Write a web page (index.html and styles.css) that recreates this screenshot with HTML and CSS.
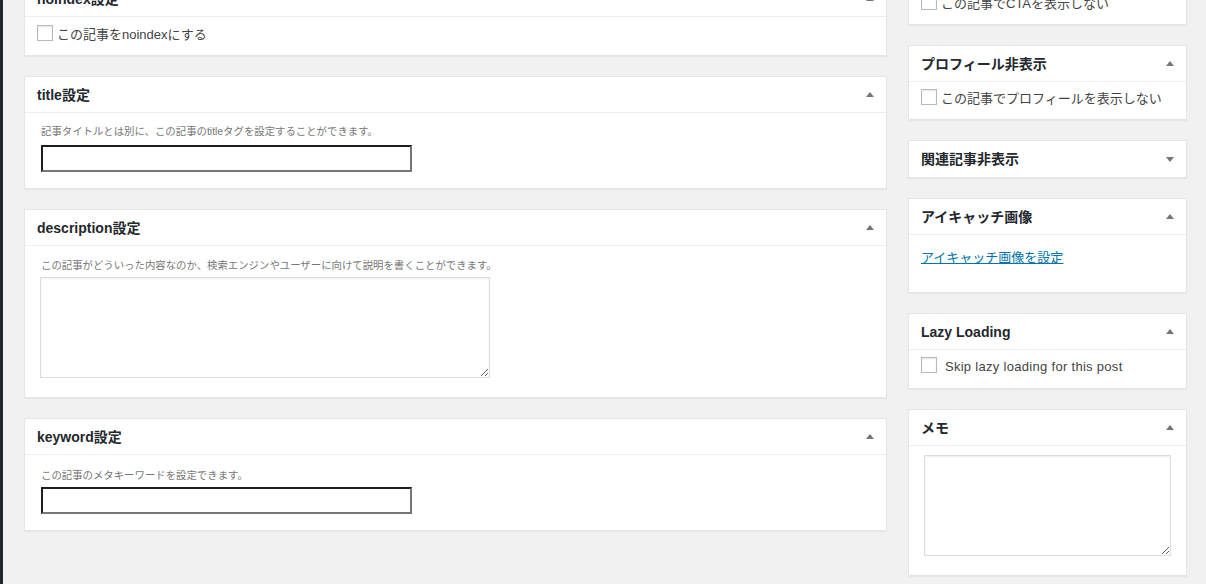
FILE: index.html
```html
<!DOCTYPE html>
<html lang="ja">
<head>
<meta charset="utf-8">
<title>投稿の編集</title>
<link rel="stylesheet" href="styles.css">
</head>
<body>
<div class="page">
  <div class="menu-edge"></div>
  <div class="content">
    <div class="col main">
      <section class="postbox">
        <h2 class="hndle"><span>noindex設定</span><svg class="toggle" viewBox="0 0 8 5"><polygon points="0,5 4,0 8,5"/></svg></h2>
        <div class="inside inside-check first">
          <label class="check"><input type="checkbox" class="cb"><span class="check-text">この記事をnoindexにする</span></label>
        </div>
      </section>

      <section class="postbox">
        <h2 class="hndle"><span>title設定</span><svg class="toggle" viewBox="0 0 8 5"><polygon points="0,5 4,0 8,5"/></svg></h2>
        <div class="inside inside-field title-inside">
          <p class="note">記事タイトルとは別に、この記事のtitleタグを設定することができます。</p>
          <input type="text" class="field-input">
        </div>
      </section>

      <section class="postbox">
        <h2 class="hndle"><span>description設定</span><svg class="toggle" viewBox="0 0 8 5"><polygon points="0,5 4,0 8,5"/></svg></h2>
        <div class="inside inside-field desc-inside">
          <p class="note">この記事がどういった内容なのか、検索エンジンやユーザーに向けて説明を書くことができます。</p>
          <textarea class="field-area"></textarea>
        </div>
      </section>

      <section class="postbox">
        <h2 class="hndle"><span>keyword設定</span><svg class="toggle" viewBox="0 0 8 5"><polygon points="0,5 4,0 8,5"/></svg></h2>
        <div class="inside inside-field kw-inside">
          <p class="note">この記事のメタキーワードを設定できます。</p>
          <input type="text" class="field-input">
        </div>
      </section>
    </div>

    <div class="col side">
      <section class="postbox">
        <h2 class="hndle"><span>CTA非表示</span><svg class="toggle" viewBox="0 0 8 5"><polygon points="0,5 4,0 8,5"/></svg></h2>
        <div class="inside inside-check">
          <label class="check"><input type="checkbox" class="cb"><span class="check-text">この記事でCTAを表示しない</span></label>
        </div>
      </section>

      <section class="postbox">
        <h2 class="hndle"><span>プロフィール非表示</span><svg class="toggle" viewBox="0 0 8 5"><polygon points="0,5 4,0 8,5"/></svg></h2>
        <div class="inside inside-check">
          <label class="check"><input type="checkbox" class="cb"><span class="check-text">この記事でプロフィールを表示しない</span></label>
        </div>
      </section>

      <section class="postbox closed">
        <h2 class="hndle"><span>関連記事非表示</span><svg class="toggle" viewBox="0 0 8 5"><polygon points="0,0 8,0 4,5"/></svg></h2>
      </section>

      <section class="postbox">
        <h2 class="hndle"><span>アイキャッチ画像</span><svg class="toggle" viewBox="0 0 8 5"><polygon points="0,5 4,0 8,5"/></svg></h2>
        <div class="inside thumb-inside">
          <a href="#" class="thumb-link">アイキャッチ画像を設定</a>
        </div>
      </section>

      <section class="postbox">
        <h2 class="hndle"><span>Lazy Loading</span><svg class="toggle" viewBox="0 0 8 5"><polygon points="0,5 4,0 8,5"/></svg></h2>
        <div class="inside inside-check lazy-inside">
          <label class="check"><input type="checkbox" class="cb"><span class="check-text latin"> Skip lazy loading for this post</span></label>
        </div>
      </section>

      <section class="postbox">
        <h2 class="hndle"><span>メモ</span><svg class="toggle" viewBox="0 0 8 5"><polygon points="0,5 4,0 8,5"/></svg></h2>
        <div class="inside memo-inside">
          <textarea class="memo-area"></textarea>
        </div>
      </section>
    </div>
  </div>
</div>
</body>
</html>
```

FILE: styles.css
```css
html, body {
  margin: 0;
  padding: 0;
  height: 100%;
  background: #f1f1f1;
  overflow: hidden;
}

body {
  font-family: "Liberation Sans", "Noto Sans CJK JP", sans-serif;
  font-size: 13px;
  color: #444;
}

.page {
  display: flex;
  height: 584px;
  overflow: hidden;
}

.menu-edge {
  flex: none;
  width: 3px;
  background: #23282d;
}

.content {
  display: flex;
  align-items: flex-start;
  gap: 21px;
  padding-left: 21px;
}

.col {
  display: flex;
  flex-direction: column;
  gap: 20px;
}

.main {
  width: 863px;
  margin-top: -20px;
}

.side {
  width: 279px;
  margin-top: -50px;
}

.postbox {
  box-sizing: border-box;
  background: #fff;
  border: 1px solid #e5e5e5;
  box-shadow: 0 1px 1px rgba(0, 0, 0, 0.04);
}

.hndle {
  display: flex;
  align-items: center;
  justify-content: space-between;
  height: 35px;
  margin: 0;
  padding: 0 12px;
  font-size: 14px;
  font-weight: 700;
  line-height: 20px;
  color: #23282d;
  border-bottom: 1px solid #eee;
}

.closed .hndle {
  height: 36px;
  border-bottom: 0;
}

.toggle {
  width: 8px;
  height: 5px;
  fill: #72777c;
  flex: none;
}

.inside {
  line-height: 18px;
}

.inside-check {
  padding: 7px 12px 14px;
}

.inside-check.first {
  padding-top: 8px;
}

.lazy-inside {
  padding-bottom: 15px;
}

.check {
  display: flex;
  align-items: flex-start;
  height: 16px;
  line-height: 16px;
  white-space: pre;
  color: #444;
}

.check-text {
  margin-top: 2px;
}

.check-text.latin {
  letter-spacing: 0.3px;
}

.cb {
  -webkit-appearance: none;
  appearance: none;
  box-sizing: border-box;
  width: 16px;
  height: 16px;
  margin: 0 4px 0 0;
  border: 1px solid #b4b9be;
  background: #fff;
  box-shadow: inset 0 1px 2px rgba(0, 0, 0, 0.1);
  flex: none;
}

.inside-field {
  padding: 0 16px 16px;
}

.title-inside {
  padding-top: 11px;
}

.title-inside .note {
  margin-bottom: 5px;
}

.desc-inside {
  padding-top: 12px;
  padding-bottom: 19px;
}

.desc-inside .note {
  margin-bottom: 3px;
}

.kw-inside {
  padding-top: 13px;
}

.kw-inside .note {
  margin-bottom: 3px;
}

.note {
  margin: 0 0 4px;
  font-size: 10.4px;
  line-height: 16px;
  color: #777;
}

.field-input {
  display: block;
  box-sizing: border-box;
  width: 371px;
  height: 27px;
  margin: 0;
  padding: 0 4px;
  border-style: solid;
  border-width: 2px;
  border-color: #1e1e1e #767676 #767676 #1e1e1e;
  background: #fff;
  font: inherit;
}

.field-area {
  display: block;
  box-sizing: border-box;
  width: 450px;
  height: 101px;
  margin: 0 0 0 -1px;
  border: 1px solid #ddd;
  box-shadow: inset 0 1px 2px rgba(0, 0, 0, 0.07);
  background: #fff;
  font: inherit;
}

.thumb-inside {
  padding: 14px 12px 25px;
}

.thumb-link {
  display: block;
  font-size: 13px;
  line-height: 18px;
  color: #0073aa;
  text-decoration: underline;
}

.memo-inside {
  padding: 9px 12px 19px;
}

.memo-area {
  display: block;
  box-sizing: border-box;
  width: 247px;
  height: 101px;
  margin: 0 3px;
  border: 1px solid #ddd;
  box-shadow: inset 0 1px 2px rgba(0, 0, 0, 0.07);
  background: #fff;
  font: inherit;
}
```
